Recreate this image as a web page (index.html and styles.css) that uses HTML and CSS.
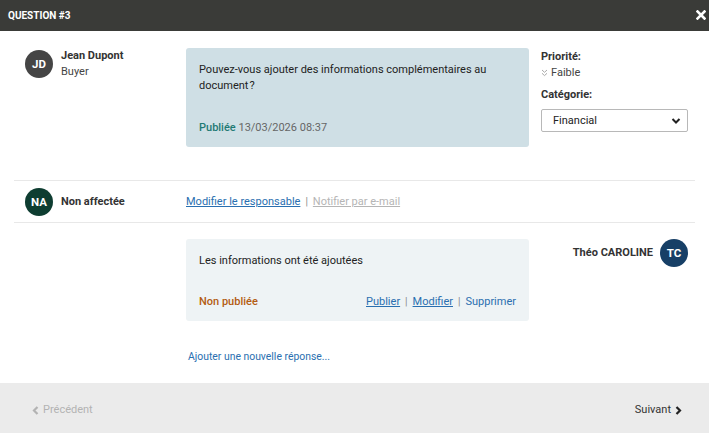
FILE: index.html
```html
<!DOCTYPE html>
<html lang="fr">
<head>
<meta charset="utf-8">
<title>Question #3</title>
<link rel="stylesheet" href="styles.css">
</head>
<body>
<div class="modal">
  <header class="modal-header">
    <h1 class="modal-title">QUESTION #3</h1>
    <button class="close" aria-label="Fermer">
      <svg width="10" height="10" viewBox="0 0 10 10"><path d="M1.5 1.5 L8.5 8.5 M8.5 1.5 L1.5 8.5" stroke="#fff" stroke-width="2.6" stroke-linecap="square"/></svg>
    </button>
  </header>

  <main class="modal-body">
    <section class="row question-row">
      <div class="author">
        <span class="avatar avatar-jd">JD</span>
        <div class="author-info">
          <div class="author-name">Jean Dupont</div>
          <div class="author-role">Buyer</div>
        </div>
      </div>
      <div class="bubble bubble-question">
        <p class="bubble-text">Pouvez-vous ajouter des informations complémentaires au document&#8202;?</p>
        <div class="bubble-meta"><span class="status-published">Publiée</span> <span class="date">13/03/2026 08:37</span></div>
      </div>
      <div class="meta-col">
        <div class="meta-label">Priorité:</div>
        <div class="priority">
          <svg class="dbl-chevron" width="7" height="8" viewBox="0 0 7 8"><path d="M1 1 L3.5 3.3 L6 1 M1 4.3 L3.5 6.6 L6 4.3" fill="none" stroke="#aaa" stroke-width="1"/></svg>
          <span>Faible</span>
        </div>
        <div class="meta-label meta-label-cat">Catégorie:</div>
        <div class="select">
          <span>Financial</span>
          <svg width="10" height="8" viewBox="0 0 10 8"><path d="M1.5 2 L5 5.5 L8.5 2" fill="none" stroke="#222" stroke-width="2"/></svg>
        </div>
      </div>
    </section>

    <section class="row assignee-row">
      <div class="author">
        <span class="avatar avatar-na">NA</span>
        <div class="author-name">Non affectée</div>
      </div>
      <div class="links">
        <a href="#" class="link">Modifier le responsable</a><span class="sep">|</span><a href="#" class="link link-disabled">Notifier par e-mail</a>
      </div>
    </section>

    <section class="row reply-row">
      <div class="author"></div>
      <div class="bubble bubble-reply">
        <p class="bubble-text">Les informations ont été ajoutées</p>
        <div class="bubble-meta bubble-meta-split">
          <span class="status-unpublished">Non publiée</span>
          <span class="reply-actions"><a href="#" class="link">Publier</a><span class="sep">|</span><a href="#" class="link">Modifier</a><span class="sep">|</span><a href="#" class="link link-plain">Supprimer</a></span>
        </div>
      </div>
      <div class="reply-author">
        <span class="author-name">Théo CAROLINE</span>
        <span class="avatar avatar-tc">TC</span>
      </div>
    </section>

    <div class="add-row">
      <a href="#" class="add-link">Ajouter une nouvelle réponse...</a>
    </div>
  </main>

  <footer class="modal-footer">
    <a href="#" class="nav nav-prev">
      <svg width="7" height="9" viewBox="0 0 7 9"><path d="M5.5 1 L2 4.5 L5.5 8" fill="none" stroke="#b3b3b3" stroke-width="2.2"/></svg>
      Précédent</a>
    <a href="#" class="nav nav-next">Suivant
      <svg width="7" height="9" viewBox="0 0 7 9"><path d="M1.5 1 L5 4.5 L1.5 8" fill="none" stroke="#222" stroke-width="2.2"/></svg>
    </a>
  </footer>
</div>
</body>
</html>
```

FILE: styles.css
```css
* { box-sizing: border-box; }
html, body { margin: 0; padding: 0; }
body {
  font-family: Roboto, "Liberation Sans", Arial, sans-serif;
  font-size: 11px;
  line-height: 16px;
  color: #333;
  background: #fff;
  width: 709px;
  height: 433px;
  overflow: hidden;
}
.modal { display: flex; flex-direction: column; height: 433px; }
.modal-header {
  height: 31px;
  background: #3a3b38;
  display: flex;
  align-items: center;
  justify-content: space-between;
  padding: 0 3px 0 8px;
}
.modal-title {
  margin: 0;
  color: #fff;
  font-size: 10px;
  font-weight: 700;
}
.close {
  border: 0;
  background: none;
  padding: 0;
  width: 10px;
  height: 10px;
  display: flex;
  margin-top: -1px;
}
.modal-body { flex: 1; padding: 17px 0 0; }
.row {
  display: grid;
  grid-template-columns: 149px 343px 147px;
  column-gap: 12px;
  margin: 0 14px;
  padding-left: 11px;
}
.author { display: flex; align-items: flex-start; gap: 8px; }
.avatar {
  width: 28px;
  height: 28px;
  border-radius: 50%;
  color: #fff;
  font-weight: 700;
  font-size: 11.5px;
  display: flex;
  align-items: center;
  justify-content: center;
  flex-shrink: 0;
}
.avatar-jd { background: #454545; margin-top: 2px; }
.avatar-na { background: #0e3d31; }
.avatar-tc { background: #173f66; }
.author-name { font-weight: 700; color: #333; }
.author-role { color: #444; }
.question-row { padding-bottom: 33px; border-bottom: 1px solid #e8e8e8; }
.bubble {
  border-radius: 3px;
  padding: 14px 13px 11px;
}
.bubble-question { background: #cfdfe5; }
.bubble-reply { background: #eef3f5; }
.bubble-text { margin: 0 0 26px; color: #222; }
.bubble-reply .bubble-text { margin-bottom: 25px; }
.status-published { color: #1f7a74; font-weight: 500; }
.date { color: #666; }
.meta-col { padding-top: 1px; }
.meta-label { font-weight: 700; color: #333; }
.meta-label-cat { margin-top: 6px; }
.priority { display: flex; align-items: center; gap: 3px; color: #444; }
.dbl-chevron { margin-top: -1px; }
.select {
  margin-top: 6px;
  width: 147px;
  height: 23px;
  border: 1px solid #b8b8b8;
  border-radius: 2px;
  background: #fff;
  display: flex;
  align-items: center;
  justify-content: space-between;
  padding: 0 6px 0 11px;
  color: #222;
}
.assignee-row {
  height: 42px;
  padding-top: 1px;
  align-items: center;
  border-bottom: 1px solid #e8e8e8;
}
.assignee-row .author { align-items: center; }
.links { display: flex; align-items: center; }
.link { color: #2a6fb0; text-decoration: underline; }
.link-disabled { color: #b5b5b5; }
.link-plain { text-decoration: none; }
.sep { color: #888; margin: 0 5px; font-size: 10px; }
.reply-row { margin-top: 16px; }
.bubble-meta-split { display: flex; justify-content: space-between; }
.status-unpublished { color: #b35c12; font-weight: 500; }
.reply-author {
  display: flex;
  justify-content: flex-end;
  align-items: center;
  gap: 7px;
  align-self: start;
}
.add-row { padding: 28px 0 0 188px; }
.add-link { color: #2a6fb0; text-decoration: none; font-size: 10.4px; }
.modal-footer {
  height: 50px;
  background: #ebebeb;
  display: flex;
  align-items: center;
  justify-content: space-between;
  padding: 4px 27px 0 32px;
}
.nav { display: flex; align-items: center; gap: 4px; text-decoration: none; }
.nav-prev { color: #b3b3b3; }
.nav-next { color: #333; }
```
